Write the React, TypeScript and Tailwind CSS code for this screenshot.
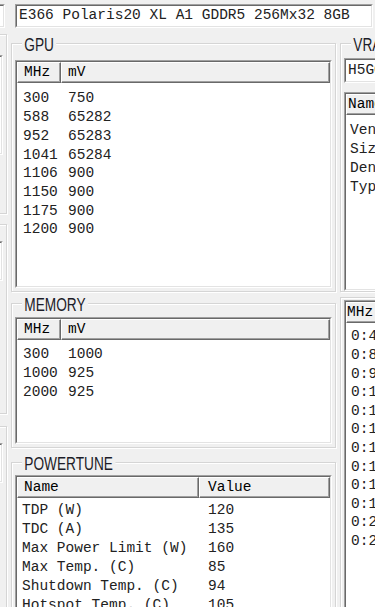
import React from "react";

const mono = "font-['Liberation_Mono','Courier_New',monospace]";
const sans = "font-['Liberation_Sans',Arial,sans-serif]";

function Sunken({ className = "", children }: { className?: string; children?: React.ReactNode }) {
  return (
    <div className={`border border-t-[#a0a0a0] border-l-[#a0a0a0] border-b-[#ffffff] border-r-[#ffffff] ${className}`}>
      <div className="flex h-full flex-col overflow-hidden border border-t-[#696969] border-l-[#696969] border-b-[#e3e3e3] border-r-[#e3e3e3] bg-white">
        {children}
      </div>
    </div>
  );
}

function Group({
  title,
  className = "",
  children,
}: {
  title?: string;
  className?: string;
  children?: React.ReactNode;
}) {
  return (
    <div className={`relative flex flex-col border border-[#d5d5d5] shadow-[inset_1px_1px_0_#ffffff,1px_1px_0_#ffffff] ${className}`}>
      {title && (
        <span
          className={`absolute left-[10px] top-[-9px] origin-left scale-x-[0.76] bg-[#f0f0f0] px-[3px] text-[18px] leading-[20px] text-[#1c1c28] ${sans}`}
        >
          {title}
        </span>
      )}
      {children}
    </div>
  );
}

type Col = { label: string; w: string; hp: string; bp: string };

function ListView({
  cols,
  rows,
  className = "",
  bodyPad = "pt-[7px]",
  rowH = "h-[18.7px]",
}: {
  cols: Col[];
  rows: string[][];
  className?: string;
  bodyPad?: string;
  rowH?: string;
}) {
  return (
    <Sunken className={className}>
      <div className="flex shrink-0">
        {cols.map((c, i) => (
          <div
            key={i}
            className={`flex h-[21px] shrink-0 items-center overflow-hidden whitespace-nowrap border-t border-l border-b border-r border-t-white border-l-white border-b-[#696969] border-r-[#696969] bg-[#f0f0f0] pt-[1px] shadow-[inset_-1px_-1px_0_#a0a0a0] text-[14.5px] text-black ${mono} ${c.w} ${c.hp}`}
          >
            {c.label}
          </div>
        ))}
      </div>
      <div className={`flex flex-col ${bodyPad}`}>
        {rows.map((r, i) => (
          <div key={i} className={`flex shrink-0 items-center ${rowH}`}>
            {r.map((cell, j) => (
              <div
                key={j}
                className={`shrink-0 overflow-visible whitespace-nowrap text-[14.5px] text-[#222] ${mono} ${cols[j].w} ${cols[j].bp}`}
              >
                {cell}
              </div>
            ))}
          </div>
        ))}
      </div>
    </Sunken>
  );
}

const mhzCols: Col[] = [
  { label: "MHz", w: "w-[44px]", hp: "pl-[6px]", bp: "pl-[6px]" },
  { label: "mV", w: "flex-1", hp: "pl-[6px]", bp: "pl-[7px]" },
];

const gpuRows = [
  ["300", "750"],
  ["588", "65282"],
  ["952", "65283"],
  ["1041", "65284"],
  ["1106", "900"],
  ["1150", "900"],
  ["1175", "900"],
  ["1200", "900"],
];

const memRows = [
  ["300", "1000"],
  ["1000", "925"],
  ["2000", "925"],
];

const ptCols: Col[] = [
  { label: "Name", w: "w-[182px]", hp: "pl-[6px]", bp: "pl-[5px]" },
  { label: "Value", w: "flex-1", hp: "pl-[8px]", bp: "pl-[9px]" },
];

const ptRows = [
  ["TDP (W)", "120"],
  ["TDC (A)", "135"],
  ["Max Power Limit (W)", "160"],
  ["Max Temp. (C)", "85"],
  ["Shutdown Temp. (C)", "94"],
  ["Hotspot Temp. (C)", "105"],
];

const vramCols: Col[] = [
  { label: "Name", w: "w-[110px]", hp: "pl-[1px]", bp: "pl-[4px]" },
  { label: "Value", w: "w-[120px]", hp: "pl-[6px]", bp: "pl-[6px]" },
];

const vramRows = [
  ["Vendor", "Hynix"],
  ["Size", "8192 MB"],
  ["Density", "256Mx32"],
  ["Type", "GDDR5"],
];

const timCols: Col[] = [
  { label: "MHz", w: "w-[60px]", hp: "pl-[0px]", bp: "pl-[5px]" },
  { label: "Timing", w: "w-[200px]", hp: "pl-[6px]", bp: "pl-[6px]" },
];

const timRows = [
  ["0:400", "777000000000000022CC1C00"],
  ["0:800", "777000000000000022CC1C00"],
  ["0:900", "777000000000000022CC1C00"],
  ["0:1000", "777000000000000022CC1C00"],
  ["0:1125", "777000000000000022CC1C00"],
  ["0:1250", "777000000000000022CC1C00"],
  ["0:1375", "777000000000000022CC1C00"],
  ["0:1500", "777000000000000022CC1C00"],
  ["0:1625", "777000000000000022CC1C00"],
  ["0:1750", "777000000000000022CC1C00"],
  ["0:2000", "777000000000000022CC1C00"],
  ["0:2250", "777000000000000022CC1C00"],
];

export default function App() {
  return (
    <div className="flex h-[607px] w-[375px] flex-col overflow-hidden bg-[#f0f0f0]">
      {/* top row */}
      <div className="flex shrink-0 pt-[4px]">
        <Sunken className="ml-[-195px] h-[24px] w-[200px] shrink-0" />
        <Sunken className="ml-[10px] h-[24px] w-[358px] shrink-0">
          <div className={`flex h-full items-center whitespace-nowrap pl-[2px] text-[14.5px] text-[#222] ${mono}`}>
            E366 Polaris20 XL A1 GDDR5 256Mx32 8GB
          </div>
        </Sunken>
      </div>

      {/* main area */}
      <div className="flex min-h-0 flex-1">
        {/* left sliver */}
        <div className="ml-[-193px] flex w-[200px] shrink-0 flex-col">
          <Group className="mt-[6px] h-[180px] shrink-0 pt-[20px] pr-[3px]">
            <Sunken className="h-[100px]" />
          </Group>
          <Group className="mt-[10px] h-[190px] shrink-0 pt-[16px] pr-[3px]">
            <Sunken className="h-[40px]" />
          </Group>
          <Group className="mt-[12px] h-[200px] shrink-0 pt-[16px] pr-[3px]">
            <Sunken className="h-[40px]" />
          </Group>
        </div>

        {/* middle column */}
        <div className="ml-[4px] flex w-[325px] shrink-0 flex-col">
          <Group title="GPU" className="mt-[15px] h-[249px] shrink-0 px-[3px] pt-[16px] pb-[3px]">
            <ListView cols={mhzCols} rows={gpuRows} className="flex-1" bodyPad="pt-[7px]" />
          </Group>
          <Group title="MEMORY" className="mt-[11px] h-[145px] shrink-0 px-[3px] pt-[13px] pb-[3px]">
            <ListView cols={mhzCols} rows={memRows} className="flex-1" bodyPad="pt-[5.5px]" rowH="h-[18.85px]" />
          </Group>
          <Group title="POWERTUNE" className="mt-[14px] h-[200px] shrink-0 px-[3px] pt-[12px] pb-[3px]">
            <ListView cols={ptCols} rows={ptRows} className="flex-1" bodyPad="pt-[3.5px]" rowH="h-[18.9px]" />
          </Group>
        </div>

        {/* right column */}
        <div className="ml-[4px] flex w-[200px] shrink-0 flex-col">
          <Group title="VRAM" className="mt-[15px] h-[249px] shrink-0 pl-[3px] pt-[14px]">
            <Sunken className="h-[25px] shrink-0">
              <div className={`flex h-full items-center whitespace-nowrap pl-[2px] text-[14.5px] text-[#222] ${mono}`}>
                H5GC8H24AJR
              </div>
            </Sunken>
            <ListView cols={vramCols} rows={vramRows} className="mt-[9px] flex-1" bodyPad="pt-[6px]" rowH="h-[19px]" />
          </Group>
          <Group className="mt-[5px] h-[320px] shrink-0 pl-[3px] pt-[2px]">
            <ListView cols={timCols} rows={timRows} className="flex-1" bodyPad="pt-[5px]" rowH="h-[18.6px]" />
          </Group>
        </div>
      </div>
    </div>
  );
}
